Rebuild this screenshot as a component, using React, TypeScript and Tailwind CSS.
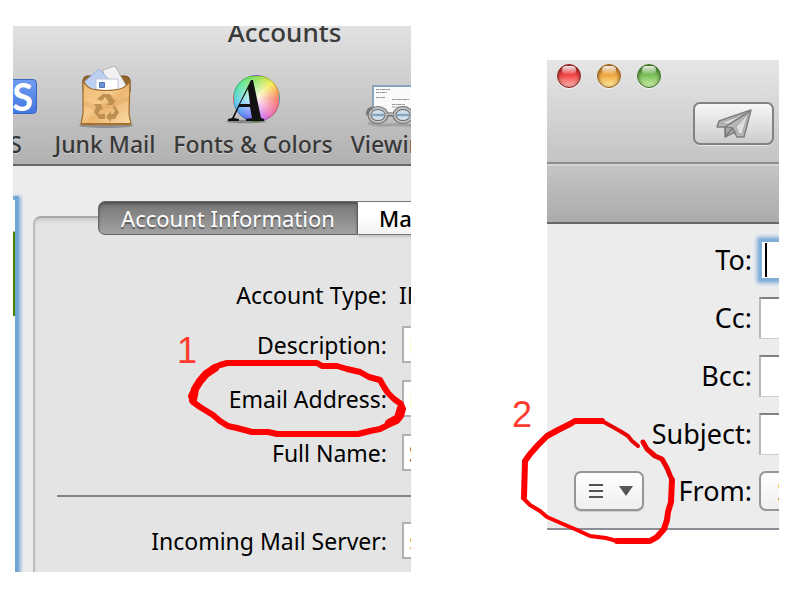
import type { ReactNode } from "react";

function RssIcon() {
  return (
    <div className="mb-1 flex h-[35px] w-[70px] shrink-0 items-center justify-end rounded-[4px] border border-[#3f68c4] bg-linear-to-b from-[#6f9cf0] to-[#4377e0] pr-[3px] font-['Lato','Noto_Sans',sans-serif] text-[38px] leading-none font-bold text-white">
      SS
    </div>
  );
}

function JunkIcon() {
  return (
    <svg viewBox="0 0 60 64" className="h-16 w-[60px]" aria-hidden="true">
      <defs>
        <linearGradient id="bag" x1="0" y1="0" x2="1" y2="1">
          <stop offset="0" stopColor="#efb76f" />
          <stop offset=".45" stopColor="#f6ca8b" />
          <stop offset=".55" stopColor="#ecb770" />
          <stop offset="1" stopColor="#fbdca8" />
        </linearGradient>
      </defs>
      <ellipse cx="31" cy="59.500" rx="27" ry="2.500" fill="#000" opacity=".25" />
      <path d="M8 14q1-4 4-4h38q4 0 5 4v12H8z" fill="#94682c" stroke="#6f4a1c" />
      <path d="M28 4L40 0l12 21-3 5H32z" fill="#f2f2f2" stroke="#a9a9a9" strokeWidth=".8" />
      <path d="M9 16L24 3l16 17-3 6H16z" fill="#bcd0f3" stroke="#8fa7d2" strokeWidth=".8" />
      <path d="M21 13h22v13H21z" fill="#fff" stroke="#b9c4d5" />
      <path d="M24.500 16.500h5v5h-5z" fill="#6b93d0" stroke="#4f79ba" />
      <path d="M8 14q3 7 9 9 14 3 28 0 7-2 10-9l-1 34 2 10H6l2-10z" fill="url(#bag)" stroke="#9d6a2a" strokeWidth="1.200" />
      <path d="M9 34l10 5 17-3 18-6v5l-17 7-17 3-11-5z" fill="#d99e55" opacity=".3" />
      <path d="M6 58h50" stroke="#a8702c" strokeWidth="2" />
      <g fill="#bd9050">
        <path d="M28 28h6l2 1 3 5 2-1-3 6h-7l3-2-3-5-1-1-3 4-5-2z" />
        <path d="M19 38h7l2 6-2-1-3 5h7v5h-6l-5-7 2-5z" />
        <path d="M39 39l5 7-4 7h-4v3l-5-5 5-6v3h2l2-3-2-3z" />
      </g>
    </svg>
  );
}

function FontsIcon() {
  return (
    <div className="relative h-16 w-[60px]">
      <div className="absolute top-[9px] left-[10px] h-[47px] w-[47px] rounded-full border border-black/20 bg-[radial-gradient(circle,#ffffffee_0%,#ffffff66_40%,#ffffff00_72%),conic-gradient(from_0deg,#85e04c,#f6e94f_45deg,#f67a5f_90deg,#ef6cb0_135deg,#c76cf0_165deg,#5a6cf5_205deg,#54c8ee_260deg,#4fe39c_305deg,#85e04c_360deg)]" />
      <svg viewBox="0 0 60 64" className="absolute inset-0 h-16 w-[60px]" aria-hidden="true">
        <ellipse cx="23" cy="55.500" rx="20" ry="1.800" fill="#000" opacity=".3" />
        <path
          fill="#111"
          d="M28 14h2l8 38 3 1v2H23v-2l6-1-2-11H16l-5 11 5 1v2H5v-2l4-1zM25 23l-8 15h10z"
        />
      </svg>
    </div>
  );
}

function ViewingIcon() {
  return (
    <svg viewBox="0 0 60 64" className="h-16 w-[60px]" aria-hidden="true">
      <path d="M9 20h50v30H9z" fill="#fafafa" stroke="#8ba3b8" strokeWidth="2" />
      <g stroke="#7a7a7a" strokeWidth=".8" strokeDasharray="3 .6 2 .4">
        <path d="M12 23.500h14M12 26.500h11M12 31.500h9M28 33.500h17M28 38.500h13M28 41h16" />
      </g>
      <path d="M4 57q8 3 19 2t30 1" stroke="#000" strokeWidth="3" opacity=".15" fill="none" />
      <g fill="#d3dfe8" stroke="#707070" strokeWidth="4">
        <ellipse cx="14" cy="49" rx="8.500" ry="7" />
        <ellipse cx="39" cy="49" rx="8.500" ry="7" />
      </g>
      <path d="M8 49h12M33 49h12" stroke="#85a6c0" strokeWidth="2.500" />
      <g fill="none" stroke="#c2c2c2" strokeWidth="1.800">
        <ellipse cx="14" cy="49" rx="8.500" ry="7" />
        <ellipse cx="39" cy="49" rx="8.500" ry="7" />
      </g>
      <path d="M23 48.500q3.500-1 7 0" fill="none" stroke="#707070" strokeWidth="3.500" />
      <path d="M23 48.500q3.500-1 7 0" fill="none" stroke="#c2c2c2" strokeWidth="1.500" />
      <path d="M4 49q-2-5 4-7" fill="none" stroke="#777" strokeWidth="3" />
    </svg>
  );
}

function ToolItem({ label, width, children }: { label: string; width: string; children: ReactNode }) {
  return (
    <button type="button" className={`flex shrink-0 flex-col items-center gap-[2px] ${width}`}>
      <span className="flex h-16 items-center justify-center">{children}</span>
      <span className="text-[23px] leading-6 font-medium whitespace-nowrap text-[#383838] [text-shadow:0_1px_0_#ffffff66]">
        {label}
      </span>
    </button>
  );
}

function FormRow({ id, label, value, color }: { id: string; label: string; value: string; color: string }) {
  return (
    <div className="flex h-[37px] items-center gap-[15px]">
      <label htmlFor={id} className="w-[353px] shrink-0 pt-[2px] text-right whitespace-nowrap">
        {label}
      </label>
      <input
        id={id}
        defaultValue={value}
        className={`h-[37px] w-[320px] shrink-0 border-2 border-[#b0b0b0] bg-white pl-[5px] outline-none ${color}`}
      />
    </div>
  );
}

function AccountsPanel() {
  return (
    <section className="overflow-hidden bg-[#ececec]">
      <header className="border-b-2 border-[#6a6868] bg-linear-to-b from-[#e2e2e2] to-[#b1b1b1] pb-2">
        <div className="flex h-[22px] items-end justify-center overflow-hidden pl-[145px]">
          <h1 className="text-[26px] leading-8 font-medium text-[#3a3a3a]">Accounts</h1>
        </div>
        <nav className="mt-[18px] -ml-[44px] flex gap-5">
          <ToolItem label="RSS" width="w-[66px]">
            <RssIcon />
          </ToolItem>
          <ToolItem label="Junk Mail" width="w-[100px]">
            <JunkIcon />
          </ToolItem>
          <ToolItem label="Fonts & Colors" width="w-[156px]">
            <FontsIcon />
          </ToolItem>
          <ToolItem label="Viewing" width="w-[86px]">
            <ViewingIcon />
          </ToolItem>
        </nav>
      </header>

      <div className="flex">
        <div className="mt-[30px] flex w-2 shrink-0 shadow-[0_0_3px_#7badd9]">
          <div className="w-[2px] border-t-4 border-[#7badd9] bg-white">
            <div className="h-8 border-b border-[#bbb]" />
            <div className="h-[84px] bg-[#4b8000]" />
          </div>
          <div className="w-[6px] rounded-tr-[3px] bg-linear-to-r from-[#72a5d4] from-50% to-[#bdd4e8]" />
        </div>
        <div className="mt-[50px] ml-3 min-w-0 flex-1 rounded-tl-lg border-t-2 border-l-2 border-t-[#a8a8a8] border-l-[#bcbcbc] bg-[#e4e4e4] pb-[13px] shadow-[inset_0_4px_4px_-2px_#00000022]">
          <div className="-mt-[17px] ml-[63px] flex h-[34px] text-[22px] leading-[30px]" role="tablist">
            <button
              type="button"
              role="tab"
              aria-selected="true"
              className="w-[260px] shrink-0 rounded-l-[7px] border border-[#666] bg-linear-to-b from-[#757575] to-[#a3a3a3] whitespace-nowrap text-white shadow-[inset_0_2px_3px_#00000055] [text-shadow:0_2px_1px_#00000066]"
            >
              Account Information
            </button>
            <button
              type="button"
              role="tab"
              aria-selected="false"
              className="w-[260px] shrink-0 border-y border-[#777] bg-linear-to-b from-white from-45% to-[#f2f2f2] pl-[21px] text-left font-medium whitespace-nowrap text-black shadow-[0_2px_2px_#00000022]"
            >
              Mailbox Behaviors
            </button>
          </div>
          <form className="-ml-px pt-[46px] text-[23px] text-black">
            <div className="flex flex-col gap-[17px]">
              <div className="flex h-7 items-center gap-3">
                <span className="w-[353px] shrink-0 text-right">Account Type:</span>
                <span>IMAP</span>
              </div>
              <FormRow id="description" label="Description:" value="iCloud" color="text-[#efd98a]" />
              <FormRow id="email" label="Email Address:" value="iCloud" color="text-[#efd98a]" />
              <FormRow id="name" label="Full Name:" value="Sam" color="text-[#5a1208]" />
            </div>
            <hr className="mt-6 mb-[25px] ml-[23px] border-t-2 border-[#858585]" />
            <FormRow id="server" label="Incoming Mail Server:" value="s.mail" color="text-[#dba24c]" />
          </form>
        </div>
      </div>
    </section>
  );
}

function TrafficLight({ color, label }: { color: string; label: string }) {
  return (
    <button
      type="button"
      aria-label={label}
      className={`flex h-6 w-6 justify-center rounded-full border pt-px shadow-[inset_0_1px_4px_#00000088,0_1px_0_#ffffff99] ${color}`}
    >
      <span className="h-2 w-[14px] rounded-full bg-linear-to-b from-white/90 to-white/10" />
    </button>
  );
}

function SendIcon() {
  return (
    <svg viewBox="0 0 36 30" className="h-[30px] w-9" aria-hidden="true" strokeLinejoin="round">
      <path d="M1 18L3 12 35 1l-7 27h-7l-5-9 3 4-10 5V18z" fill="#b6b6b6" stroke="#808080" strokeWidth="1.500" />
      <path d="M5 14L29 5 12 15zM32 5L20 18l3 7h3z" fill="#dedede" stroke="#a0a0a0" strokeWidth=".8" />
      <path d="M9 18L33 3M9 18l8 1-7 8z" fill="#a5a5a5" stroke="#777" strokeWidth="1.200" />
    </svg>
  );
}

const recipientRows = [
  { id: "to", label: "To:" },
  { id: "cc", label: "Cc:" },
  { id: "bcc", label: "Bcc:" },
  { id: "subject", label: "Subject:" },
];

function ComposePanel() {
  return (
    <section className="overflow-hidden border-b-2 border-[#8b8e95] bg-[#ececec]">
      <header className="border-b-2 border-[#8d8d8d] bg-linear-to-b from-[#e6e6e6] to-[#c4c4c4] pt-1 pr-[5px] pb-[17px] pl-[10px]">
        <div className="flex gap-4">
          <TrafficLight label="Close" color="border-[#8c2020] bg-linear-to-b from-[#d9292b] via-[#f24a4a] to-[#ffb4b4]" />
          <TrafficLight label="Minimize" color="border-[#9a6218] bg-linear-to-b from-[#de8a28] via-[#f2ac47] to-[#fff0a0]" />
          <TrafficLight label="Zoom" color="border-[#3c7424] bg-linear-to-b from-[#4f9c36] via-[#80c25e] to-[#d4f6ae]" />
        </div>
        <div className="mt-[14px] flex justify-end">
          <button
            type="button"
            aria-label="Send"
            className="flex h-[43px] w-[81px] items-center justify-center rounded-[7px] border-2 border-[#828282] bg-linear-to-b from-[#f6f6f6] to-[#cdcdcd] shadow-[0_1px_0_#ffffff88]"
          >
            <SendIcon />
          </button>
        </div>
      </header>
      <div className="h-[60px] border-b-2 border-[#676767] bg-linear-to-b from-[#c6c6c6] to-[#ababab] shadow-[inset_0_2px_0_#d4d4d4]" />
      <form className="flex flex-col gap-4 pt-[15px] pb-[17px] text-[27px] leading-9 text-black">
        {recipientRows.map((row) => (
          <div key={row.id} className="flex h-[42px] items-center gap-[7px]">
            <label htmlFor={row.id} className="w-[205px] shrink-0 text-right">
              {row.label}
            </label>
            {row.id === "to" ? (
              <div className="flex h-[42px] min-w-0 flex-1 items-center border-y-[3px] border-l-[3px] border-y-[#82afd8] border-l-[#82afd8] bg-white shadow-[0_0_4px_2px_#7badd9]">
                <input id="to" className="ml-[3px] h-[34px] w-full min-w-0 border-l-2 border-black outline-none" />
              </div>
            ) : (
              <input
                id={row.id}
                className="h-[42px] min-w-0 flex-1 border-t-2 border-b border-l-2 border-t-[#808080] border-b-[#d0d0d0] border-l-[#b8b8b8] bg-white outline-none"
              />
            )}
          </div>
        ))}
        <div className="flex h-10 items-center">
          <button
            type="button"
            aria-label="Header fields"
            className="ml-[27px] flex h-10 w-[70px] shrink-0 items-center justify-center gap-4 rounded-[7px] border-2 border-[#969696] bg-linear-to-b from-white to-[#efefef] pl-1 shadow-[0_1px_1px_#00000022]"
          >
            <svg viewBox="0 0 14 16" className="h-4 w-[14px]" aria-hidden="true">
              <path d="M0 2h14M0 8h14M0 14h14" stroke="#555" strokeWidth="2" />
            </svg>
            <svg viewBox="0 0 14 10" className="h-[10px] w-[14px]" aria-hidden="true">
              <path d="M0 0h14L7 10z" fill="#555" />
            </svg>
          </button>
          <label htmlFor="from" className="w-[108px] shrink-0 text-right">
            From:
          </label>
          <select
            id="from"
            className="ml-[7px] h-10 w-[200px] shrink-0 appearance-none rounded-[7px] border-2 border-[#969696] bg-linear-to-b from-white to-[#efefef] pl-4 text-[#b06a20] outline-none"
          >
            <option>Sam</option>
          </select>
        </div>
      </form>
    </section>
  );
}

export default function App() {
  return (
    <main className="grid grid-cols-[398fr_232fr] items-start gap-[136px] bg-white pt-[26px] pr-[21px] pl-[13px] font-['Lucida_Grande','Noto_Sans',sans-serif]">
      <div className="relative min-w-0">
        <AccountsPanel />
        <span className="pointer-events-none absolute top-[305px] left-[164px] font-['Liberation_Sans',sans-serif] text-[36px] leading-10 text-[#ff3b2f]">
          1
        </span>
        <svg
          viewBox="183 350 230 95"
          className="pointer-events-none absolute top-[324px] left-[170px] h-[95px] w-[230px]"
          fill="none"
          stroke="#f00"
          strokeLinecap="round"
          strokeLinejoin="round"
          aria-hidden="true"
        >
          <path
            strokeWidth="6"
            d="M227 363H317L322 366H337L347 369 360 372 369 377 380 380 384 387 388 393 394 399 401 404 403 409 401 416 397 421 390 424 380 429 370 431 358 434H277L268 432H252L237 428 228 426 220 421 213 415 200 407 193 402 191 396 194 390 199 383 206 375 213 368 220 365z"
          />
          <path strokeWidth="8" d="M215 368L206 374 200 381 195 389 193 400M401 408L398 418 389 423" />
        </svg>
      </div>
      <div className="relative mt-[34px] min-w-0">
        <ComposePanel />
        <span className="pointer-events-none absolute top-[335px] -left-[35px] font-['Liberation_Sans',sans-serif] text-[36px] leading-10 text-[#ff3b2f]">
          2
        </span>
        <svg
          viewBox="515 410 165 140"
          className="pointer-events-none absolute top-[350px] -left-[32px] h-[140px] w-[165px]"
          fill="none"
          stroke="#f00"
          strokeLinecap="round"
          strokeLinejoin="round"
          aria-hidden="true"
        >
          <path stroke="#ea0000" strokeWidth="4" d="M638 446L632 441 628 436 620 431 611 426 602 421" />
          <path strokeWidth="6" d="M602 421H575L570 424 558 430 547 436 538 445 530 454 525 461 524 497" />
          <path strokeWidth="4" d="M523 498L530 505 540 511 547 517 563 524 577 530 590 536 606 538 617 541" />
          <path strokeWidth="6" d="M617 541H650L657 537 664 529 667 520 668 512 671 502 672 480" />
          <path stroke="#ec0000" strokeWidth="5" d="M672 480L667 468 662 459 655 456 647 449 643 442" />
        </svg>
      </div>
    </main>
  );
}
